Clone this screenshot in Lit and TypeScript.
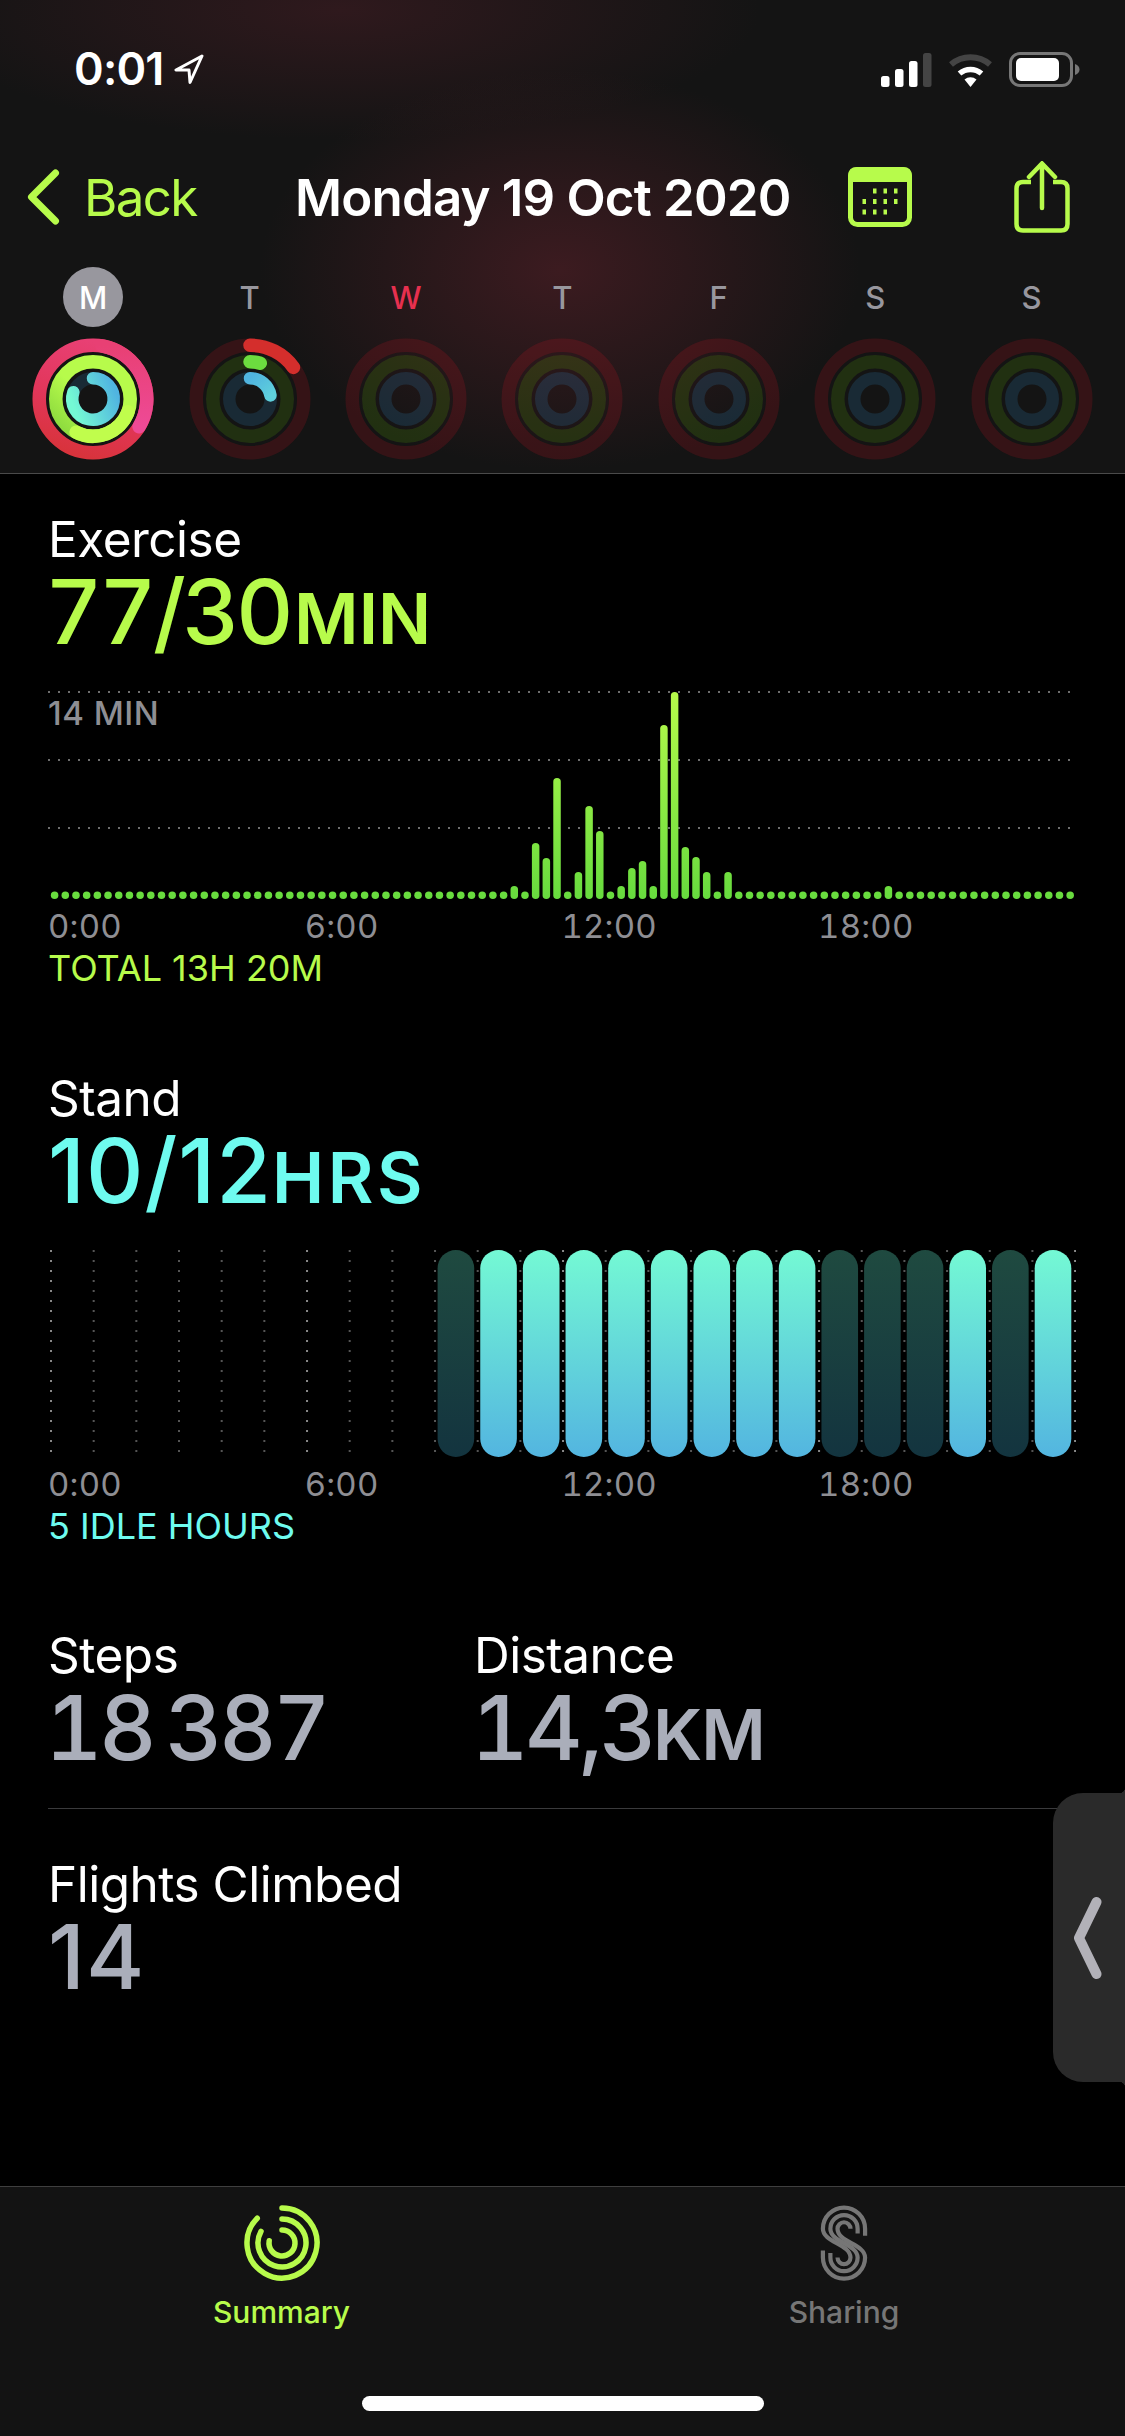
import {LitElement, html, svg, css} from 'lit';
import {customElement} from 'lit/decorators.js';

const days = ['M', 'T', 'W', 'T', 'F', 'S', 'S'];

// exercise minutes per 15 min slot, as bar heights in px; anything else is a dot
const exerciseBars: Record<number, number> = {
  43: 13, 45: 56, 46: 41, 47: 121, 49: 27, 50: 93, 51: 68, 53: 13, 54: 31, 55: 38,
  56: 13, 57: 174, 58: 207, 59: 52, 60: 42, 61: 27, 63: 27, 78: 13,
};

const standHours = [0, 1, 1, 1, 1, 1, 1, 1, 1, 0, 0, 0, 1, 0, 1];

const arc = (r: number, from: number, to: number) => {
  const p = (a: number) => {
    const t = (a - 90) * Math.PI / 180;
    return `${(r * Math.cos(t)).toFixed(2)} ${(r * Math.sin(t)).toFixed(2)}`;
  };
  return `M${p(from)}A${r} ${r} 0 ${to - from > 180 ? 1 : 0} 1 ${p(to)}`;
};

@customElement('app-root')
export class AppRoot extends LitElement {
  static override styles = css`
    * {
      box-sizing: border-box;
      margin: 0;
      padding: 0;
    }

    :host {
      display: block;
      width: 1125px;
      height: 2436px;
      background: #000;
      font-family: Inter, "Noto Sans", sans-serif;
      color: #fff;
      overflow: hidden;
    }

    #page {
      position: relative;
      display: flex;
      flex-direction: column;
      height: 100%;
    }

    header {
      height: 474px;
      flex: none;
      border-bottom: 1.5px solid #4a4a4a;
      background:
        radial-gradient(ellipse 300px 200px at 560px 270px, #3c1b20, rgba(60,27,32,0)),
        radial-gradient(ellipse 420px 130px at 340px 10px, #2f191d, rgba(47,25,29,0)),
        #141414;
    }

    .status {
      height: 147px;
      padding: 47px 43px 0 74px;
      display: flex;
      justify-content: space-between;
      align-items: flex-start;
    }

    .time {
      display: flex;
      align-items: center;
      gap: 10px;
      font-size: 45px;
      font-weight: 600;
      letter-spacing: -0.8px;
      line-height: 44px;
    }

    .status-icons {
      display: flex;
      align-items: center;
      gap: 15px;
      padding-top: 5px;
    }

    .nav {
      height: 100px;
      padding-left: 27px;
      display: flex;
      align-items: center;
      color: #b7fb4b;
    }

    .back {
      display: flex;
      align-items: center;
      gap: 24px;
      width: 268px;
      font-size: 51px;
      letter-spacing: -1.6px;
    }

    .title {
      width: 553px;
      color: #fff;
      font-size: 51px;
      font-weight: 600;
      letter-spacing: -0.8px;
      white-space: nowrap;
    }

    .nav-actions {
      display: flex;
      align-items: center;
      gap: 102px;
    }

    .week {
      display: grid;
      grid-template-columns: repeat(7, 156.4px);
      padding-left: 15px;
      margin-top: 20px;
    }

    .day {
      display: flex;
      flex-direction: column;
      align-items: center;
      gap: 11px;
    }

    .letter {
      width: 60px;
      height: 60px;
      border-radius: 50%;
      display: flex;
      align-items: center;
      justify-content: center;
      color: #98979e;
      font-size: 31px;
      font-weight: 500;
    }

    .letter.today {
      background: #98979e;
      color: #fff;
    }

    .letter.wed {
      color: #e6304f;
    }

    main {
      flex: 1;
      padding: 0 49px 0 48px;
    }

    .label {
      font-size: 49.5px;
      line-height: 58px;
      letter-spacing: -0.5px;
    }

    .value {
      margin-left: -3px;
      font-size: 89px;
      line-height: 88px;
      font-weight: 500;
      font-feature-settings: "tnum";
      letter-spacing: -3.7px;
      word-spacing: -8px;
      white-space: nowrap;
    }

    .value.prop {
      margin-left: 0;
      font-feature-settings: normal;
      letter-spacing: 1px;
    }

    .value small {
      font-size: 70px;
      line-height: 0;
      font-weight: 600;
      letter-spacing: 0;
      margin-left: 4px;
    }

    .value small.wide {
      letter-spacing: 3.5px;
      margin-left: 0;
    }

    .value small.km {
      letter-spacing: -1px;
      margin-left: 0;
    }

    .exercise-head {
      padding-top: 36px;
    }

    .move {
      color: #b7fb4b;
    }

    .stand {
      color: #6efbef;
    }

    .gray {
      color: #aaaeba;
    }

    .chart {
      display: block;
    }

    .exercise-chart {
      position: relative;
      margin-top: 35px;
    }

    .chart-tag {
      position: absolute;
      left: 0;
      top: 4px;
      color: #8e8e93;
      font-size: 33px;
      font-weight: 500;
      letter-spacing: 0.5px;
      line-height: 36px;
    }

    .axis {
      display: grid;
      grid-template-columns: repeat(4, 256.7px);
      color: #8e8e93;
      font-size: 33px;
      font-feature-settings: "tnum";
      letter-spacing: 0.2px;
      line-height: 40px;
      margin-top: 6px;
    }

    .note {
      font-size: 36px;
      line-height: 44px;
    }

    .stand-head {
      padding-top: 79px;
    }

    .stand-chart {
      margin-top: 35px;
    }

    .metrics {
      display: grid;
      grid-template-columns: 426px 1fr;
      padding-top: 78px;
      padding-bottom: 36px;
      border-bottom: 1.5px solid #3a3a3c;
    }

    .flights {
      padding-top: 45.5px;
    }

    .handle {
      position: absolute;
      right: 0;
      top: 1793px;
      width: 72px;
      height: 289px;
      background: #2a2a2a;
      border-radius: 30px 0 0 30px;
      display: flex;
      align-items: center;
      padding-left: 21px;
    }

    .handle::before,
    .handle::after {
      content: '';
      position: absolute;
      right: 0;
      width: 6px;
      height: 6px;
    }

    .handle::before {
      top: -6px;
      background: radial-gradient(circle at 0 0, transparent 6px, #2a2a2a 6.5px);
    }

    .handle::after {
      bottom: -6px;
      background: radial-gradient(circle at 0 100%, transparent 6px, #2a2a2a 6.5px);
    }

    nav {
      height: 250px;
      flex: none;
      background: #131313;
      border-top: 1.5px solid #3f3f3f;
      display: grid;
      grid-template-columns: 563px 562px;
      position: relative;
    }

    .tab {
      display: flex;
      flex-direction: column;
      align-items: center;
      padding-top: 18px;
      gap: 13px;
      color: #767676;
      font-size: 30px;
      font-weight: 500;
    }

    .tab.on {
      color: #b7fb4b;
    }

    .home {
      position: absolute;
      left: 362px;
      top: 209px;
      width: 402px;
      height: 15px;
      border-radius: 8px;
      background: #fff;
    }
  `;

  rings(i: number) {
    const tracks = svg`
      <circle r="53.75" fill="none" stroke="rgba(230,20,40,0.16)" stroke-width="13.5"></circle>
      <circle r="37.25" fill="none" stroke="rgba(110,220,0,0.14)" stroke-width="13.5"></circle>
      <circle r="20.75" fill="none" stroke="rgba(60,180,255,0.14)" stroke-width="12.5"></circle>
    `;
    let active = svg``;
    if (i === 0) {
      active = svg`
        <circle r="53.75" fill="none" stroke="url(#redG)" stroke-width="13.5"></circle>
        <path d=${arc(53.75, 10, 121)} fill="none" stroke="url(#pinkG)" stroke-width="13.5" stroke-linecap="round"></path>
        <circle r="37.25" fill="none" stroke="url(#greenG)" stroke-width="13.5"></circle>
        <path d=${arc(37.25, 110, 207)} fill="none" stroke="#c0fd4c" stroke-width="13.5" stroke-linecap="round"></path>
        <path d=${arc(20.75, 0, 289)} fill="none" stroke="url(#blueG)" stroke-width="12.5" stroke-linecap="round"></path>
      `;
    } else if (i === 1) {
      active = svg`
        <path d=${arc(53.75, 0, 54)} fill="none" stroke="#d42e2c" stroke-width="13.5" stroke-linecap="round"></path>
        <path d=${arc(37.25, 0, 16)} fill="none" stroke="#6cdc3f" stroke-width="13.5" stroke-linecap="round"></path>
        <path d=${arc(20.75, 0, 80)} fill="none" stroke="url(#blueS)" stroke-width="12.5" stroke-linecap="round"></path>
      `;
    }
    return html`
      <svg width="122" height="122" viewBox="-61 -61 122 122">
        <defs>
          <linearGradient id="redG" x1="0.3" y1="1" x2="0.6" y2="0">
            <stop offset="0" stop-color="#d8333c"></stop>
            <stop offset="0.45" stop-color="#e2365a"></stop>
            <stop offset="1" stop-color="#e84074"></stop>
          </linearGradient>
          <linearGradient id="pinkG" x1="0" y1="0" x2="0" y2="1">
            <stop offset="0" stop-color="#e84074"></stop>
            <stop offset="1" stop-color="#ee4a96"></stop>
          </linearGradient>
          <linearGradient id="greenG" x1="0.1" y1="0.9" x2="0.45" y2="0.55">
            <stop offset="0" stop-color="#8fdc3f"></stop>
            <stop offset="1" stop-color="#b7fb4b"></stop>
          </linearGradient>
          <linearGradient id="blueG" x1="0" y1="0.6" x2="1" y2="0.2">
            <stop offset="0" stop-color="#74f9d4"></stop>
            <stop offset="1" stop-color="#50b4e0"></stop>
          </linearGradient>
          <linearGradient id="blueS" x1="0" y1="0" x2="1" y2="1">
            <stop offset="0" stop-color="#50b4e0"></stop>
            <stop offset="1" stop-color="#5fd0dc"></stop>
          </linearGradient>
        </defs>
        ${tracks}${active}
      </svg>
    `;
  }

  exerciseChart() {
    const bottom = 208;
    const bars = Array.from({length: 96}, (_, i) => {
      const h = exerciseBars[i] ?? 7.5;
      const x = 6.6 + i * 10.69 - 3.75;
      return svg`<rect x=${x} y=${bottom - h} width="7.5" height=${h} rx="3.75"
        fill="url(#exG)"></rect>`;
    });
    const grid = [1, 69, 137].map((y) => svg`
      <line x1="0" x2="1024" y1=${y} y2=${y} stroke="#6e6e6e" stroke-width="2" stroke-dasharray="2 8"></line>
    `);
    return html`
      <svg class="chart" width="1028" height="209" viewBox="0 0 1028 209">
        <defs>
          <linearGradient id="exG" gradientUnits="userSpaceOnUse" x1="0" y1="1" x2="0" y2="208">
            <stop offset="0" stop-color="#b7fb4b"></stop>
            <stop offset="1" stop-color="#67db3e"></stop>
          </linearGradient>
        </defs>
        ${grid}${bars}
      </svg>
    `;
  }

  standChart() {
    const lines = Array.from({length: 25}, (_, i) => {
      const x = 3 + i * 42.67;
      return svg`<line x1=${x} x2=${x} y1="0" y2="207" stroke=${i % 6 === 0 ? '#888' : '#555'} stroke-width="2" stroke-dasharray="2 8"></line>`;
    });
    const bars = standHours.map((on, i) => svg`
      <rect x=${389.6 + i * 42.65} y="0" width="36.6" height="207" rx="18.3"
        fill=${on ? 'url(#stOn)' : 'url(#stOff)'}></rect>
    `);
    return html`
      <svg class="chart stand-chart" width="1028" height="208" viewBox="0 0 1028 208">
        <defs>
          <linearGradient id="stOn" x1="0" y1="0" x2="0" y2="1">
            <stop offset="0" stop-color="#74f9d4"></stop>
            <stop offset="1" stop-color="#53b5e0"></stop>
          </linearGradient>
          <linearGradient id="stOff" x1="0" y1="0" x2="0" y2="1">
            <stop offset="0" stop-color="#1f4a40"></stop>
            <stop offset="1" stop-color="#13343f"></stop>
          </linearGradient>
        </defs>
        ${lines}${bars}
      </svg>
    `;
  }

  calendarDots() {
    const rows = [[1, 2, 3], [0, 1, 2, 3], [0, 1, 2]];
    return rows.map((cols, r) => cols.map((c) => svg`
      <rect x=${14.5 + c * 10.5} y=${21.5 + r * 10.5} width="3.5" height="5" fill="#b7fb4b"></rect>
    `));
  }

  override render() {
    return html`
      <div id="page">
        <header>
          <div class="status">
            <div class="time">
              0:01
              <svg width="30" height="30" viewBox="0 0 30 30">
                <path d="M28 2 L2 16 L15 16 L16 28.5 Z" fill="none" stroke="#fff" stroke-width="3" stroke-linejoin="round"></path>
              </svg>
            </div>
            <div class="status-icons">
              <svg width="51" height="34" viewBox="0 0 51 34">
                <rect x="0" y="23" width="8.5" height="11" rx="2.5" fill="#fff"></rect>
                <rect x="14" y="16" width="8.5" height="18" rx="2.5" fill="#fff"></rect>
                <rect x="28" y="8" width="8.5" height="26" rx="2.5" fill="#fff"></rect>
                <rect x="42" y="0" width="8.5" height="34" rx="2.5" fill="#444"></rect>
              </svg>
              <svg width="47" height="34" viewBox="0 0 47 34">
                <path d="M23.5 34 L17.5 26.5 A9.5 9.5 0 0 1 29.5 26.5 Z" fill="#fff"></path>
                <path d="M12.5 20.5 A17 17 0 0 1 34.5 20.5" fill="none" stroke="#fff" stroke-width="5.5"></path>
                <path d="M4 11.5 A30 30 0 0 1 43 11.5" fill="none" stroke="#444" stroke-width="6"></path>
              </svg>
              <svg width="73" height="35" viewBox="0 0 73 35">
                <rect x="1.5" y="1.5" width="61" height="32" rx="9.5" fill="none" stroke="#777" stroke-width="3"></rect>
                <rect x="7" y="6" width="43" height="23" rx="5" fill="#fff"></rect>
                <path d="M66 12 C69 13 70.5 15 70.5 17.5 C70.5 20 69 22 66 23 Z" fill="#777"></path>
              </svg>
            </div>
          </div>
          <div class="nav">
            <div class="back">
              <svg width="33" height="56" viewBox="0 0 33 56">
                <path d="M28.5 4 L4.5 28 L28.5 52" fill="none" stroke="#b7fb4b" stroke-width="7" stroke-linecap="round" stroke-linejoin="round"></path>
              </svg>
              Back
            </div>
            <div class="title">Monday 19 Oct 2020</div>
            <div class="nav-actions">
              <svg width="64" height="60" viewBox="0 0 64 60">
                <rect x="2.5" y="2.5" width="59" height="55" rx="7" fill="none" stroke="#b7fb4b" stroke-width="5"></rect>
                <path d="M9 0 H55 Q64 0 64 9 V15 H0 V9 Q0 0 9 0 Z" fill="#b7fb4b"></path>
                ${this.calendarDots()}
              </svg>
              <svg width="56" height="72" viewBox="0 0 56 72">
                <path d="M17 21 H9 Q2.5 21 2.5 27.5 V63 Q2.5 69.5 9 69.5 H47 Q53.5 69.5 53.5 63 V27.5 Q53.5 21 47 21 H39" fill="none" stroke="#b7fb4b" stroke-width="4.5"></path>
                <path d="M28 3 V47 M15 16 L28 2.5 L41 16" fill="none" stroke="#b7fb4b" stroke-width="4.5" stroke-linecap="round"></path>
              </svg>
            </div>
          </div>
          <div class="week">
            ${days.map((d, i) => html`
              <div class="day">
                <div class="letter ${i === 0 ? 'today' : ''} ${i === 2 ? 'wed' : ''}">${d}</div>
                ${this.rings(i)}
              </div>
            `)}
          </div>
        </header>

        <main>
          <div class="exercise-head">
            <div class="label">Exercise</div>
            <div class="value move">77/30<small>MIN</small></div>
          </div>
          <div class="exercise-chart">
            ${this.exerciseChart()}
            <div class="chart-tag">14 MIN</div>
          </div>
          <div class="axis"><span>0:00</span><span>6:00</span><span>12:00</span><span>18:00</span></div>
          <div class="note move">TOTAL 13H 20M</div>

          <div class="stand-head">
            <div class="label">Stand</div>
            <div class="value stand prop">10/12<small class="wide">HRS</small></div>
          </div>
          ${this.standChart()}
          <div class="axis"><span>0:00</span><span>6:00</span><span>12:00</span><span>18:00</span></div>
          <div class="note stand">5 IDLE HOURS</div>

          <div class="metrics">
            <div>
              <div class="label">Steps</div>
              <div class="value gray">18 387</div>
            </div>
            <div>
              <div class="label">Distance</div>
              <div class="value gray">14,3<small class="km">KM</small></div>
            </div>
          </div>
          <div class="flights">
            <div class="label">Flights Climbed</div>
            <div class="value gray prop">14</div>
          </div>
        </main>

        <div class="handle">
          <svg width="28" height="82" viewBox="0 0 28 82">
            <path d="M22.5 5 L5 41 L22.5 77" fill="none" stroke="#b2b1b8" stroke-width="10" stroke-linecap="round" stroke-linejoin="round"></path>
          </svg>
        </div>

        <nav>
          <div class="tab on">
            <svg width="76" height="76" viewBox="-38 -38 76 76">
              <g fill="none" stroke="#b7fb4b" stroke-width="5.5" stroke-linecap="round">
                <path d=${arc(35, 0, 315)}></path>
                <path d=${arc(24, 0, 299)}></path>
                <path d=${arc(13, 0, 280)}></path>
              </g>
            </svg>
            Summary
          </div>
          <div class="tab">
            <svg width="48" height="76" viewBox="88 30 148 234">
              <g fill="none" stroke="#767676" stroke-width="13">
                <path d="M227 125 V103 A65 65 0 0 0 97 103 C97 145 182 150 182 192 A20 20 0 0 1 142 192"></path>
                <path d="M204 118 V103 A42 42 0 0 0 120 103 C120 145 204 150 204 192 A42 42 0 0 1 120 192 V178"></path>
                <path d="M182 103 A20 20 0 0 0 142 103 C142 145 227 150 227 192 A65 65 0 0 1 97 192 V170"></path>
              </g>
            </svg>
            Sharing
          </div>
          <div class="home"></div>
        </nav>
      </div>
    `;
  }
}

declare global {
  interface HTMLElementTagNameMap {
    'app-root': AppRoot;
  }
}
